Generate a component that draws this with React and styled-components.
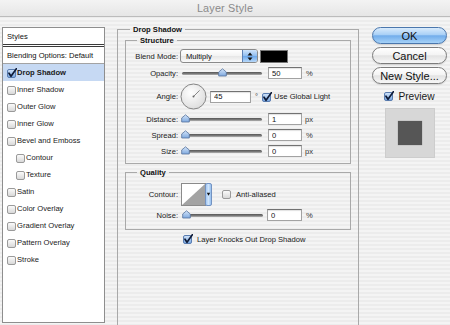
import React from 'react'
import styled, { createGlobalStyle } from 'styled-components'

const GlobalStyle = createGlobalStyle`
	html, body {
		margin: 0;
		padding: 0;
	}
	body {
		width: 450px;
		height: 325px;
		overflow: hidden;
		font-family: "Liberation Sans", Arial, sans-serif;
		color: #111;
	}
`

const Window = styled.div`
	width: 450px;
	height: 325px;
	display: flex;
	flex-direction: column;
	overflow: hidden;
	background: repeating-linear-gradient(to bottom, #ececec 0, #ececec 2px, #f4f4f4 2px, #f4f4f4 4px);
`
const TitleBar = styled.div`
	height: 16px;
	flex: none;
	display: flex;
	align-items: center;
	justify-content: center;
	border-bottom: 1px solid #bcbcbc;
	background: linear-gradient(#f3f3f3, #e6e6e6);
	font-size: 10.8px;
	color: #8a8a8a;
	letter-spacing: 0.2px;
`
const Body = styled.div`
	flex: 1;
	min-height: 0;
	display: flex;
	padding: 7px 3px 0 2px;
`

// LEFT LIST
const Sidebar = styled.div`
	width: 103px;
	height: 296px;
	flex: none;
	box-sizing: border-box;
	margin-top: 3px;
	margin-right: 12px;
	background: #fff;
	border: 1px solid #8e8e8e;
	font-size: 7.6px;
`
const SideHead = styled.div`
	height: 16px;
	display: flex;
	align-items: center;
	padding-left: 4px;
	color: #111;
	border-bottom: ${props => props.$double ? '3px double #3a3a3a' : '1px solid #a3a3a3'};
`
const StyleItem = styled.div`
	height: 17px;
	display: flex;
	align-items: center;
	padding-left: ${props => props.$indent ? 13 : 4}px;
	background: ${props => props.$active ? '#c6d9f3' : 'transparent'};
	font-weight: ${props => props.$active ? 'bold' : 'normal'};
	color: #1a1a1a;
`

// MIDDLE
const Middle = styled.div`
	width: 242px;
	flex: none;
	display: flex;
	flex-direction: column;
	font-size: 7.6px;
`
const Group = styled.fieldset`
	margin: 0;
	min-width: 0;
	min-inline-size: 0;
	padding: ${props => props.$pad};
	border: 1px solid #a9a9a9;
	margin-top: ${props => props.$top || 0}px;
	${props => props.$open && 'border-bottom: none; flex: 1;'}
`
const GroupTitle = styled.legend`
	padding: 0 3px;
	margin-left: ${props => props.$indent}px;
	font-size: 7.6px;
	font-weight: bold;
	line-height: 11px;
	color: #111;
`
const Row = styled.div`
	height: ${props => props.$h}px;
	display: flex;
	align-items: center;
	padding-left: ${props => props.$indent || 0}px;
`
const Label = styled.span`
	width: 54px;
	flex: none;
	box-sizing: border-box;
	padding-right: 2px;
	text-align: right;
	color: #1a1a1a;
`
const Unit = styled.span`
	margin-left: ${props => props.$gap || 4}px;
	color: #333;
`
const Popup = styled.div`
	width: 78px;
	height: 14px;
	box-sizing: border-box;
	display: flex;
	border: 1px solid #8a8a8a;
	border-radius: 3px;
	overflow: hidden;
	background: linear-gradient(#ffffff, #f3f3f3 50%, #e6e6e6 51%, #fafafa);
`
const PopupText = styled.span`
	flex: 1;
	display: flex;
	align-items: center;
	padding-left: 5px;
	color: #111;
`
const Stepper = styled.span`
	width: 14px;
	display: flex;
	align-items: center;
	justify-content: center;
	border-left: 1px solid #5d80b4;
	background: linear-gradient(#cfe4fb, #8fbdf0 50%, #6aa6ea 51%, #b7d8fa);
`
const Swatch = styled.div`
	width: 28px;
	height: 13px;
	margin-left: 2px;
	box-sizing: border-box;
	background: #000;
	border: 1px solid #777;
`
const SliderBox = styled.div`
	position: relative;
	width: ${props => props.$w || 84}px;
	height: 10px;
	margin-left: ${props => props.$left || 0}px;
	flex: none;
	display: flex;
	align-items: center;
	padding: 0 2px;
	box-sizing: border-box;
`
const Track = styled.div`
	flex: 1;
	height: 3px;
	border-radius: 2px;
	background: linear-gradient(#555, #7e7e7e 60%, #b5b5b5);
`
const ThumbWrap = styled.svg`
	position: absolute;
	top: 0;
	left: calc(5px + (100% - 10px) * ${props => props.$value / 100} - 4.5px);
`
const Field = styled.input`
	width: ${props => props.$w || 34}px;
	height: 12px;
	box-sizing: border-box;
	margin: 0 0 0 ${props => props.$gap || 4}px;
	padding: 0 0 0 3px;
	border: 1px solid #a2a2a2;
	border-top-color: #727272;
	box-shadow: inset 0 1px 1px rgba(0, 0, 0, 0.12);
	background: #fff;
	font-family: "Liberation Sans", Arial, sans-serif;
	font-size: 7.6px;
	color: #111;
	outline: none;
`
const CheckLabel = styled.span`
	margin-left: ${props => props.$gap || 4}px;
	color: #1a1a1a;
`
const Spacer = styled.span`
	width: ${props => props.$w}px;
	flex: none;
`

// RIGHT COLUMN
const Side = styled.div`
	width: 75px;
	flex: none;
	margin-left: 13px;
	margin-top: 3px;
	display: flex;
	flex-direction: column;
	align-items: center;
`
const Button = styled.div`
	width: 75px;
	height: 17px;
	box-sizing: border-box;
	margin-bottom: 3px;
	display: flex;
	align-items: center;
	justify-content: center;
	border-radius: 9px;
	font-size: 11px;
	color: #111;
	border: 1px solid ${props => props.$primary ? '#4b77ad' : '#7d7d7d'};
	background: ${props => props.$primary
		? 'linear-gradient(#d9ebfc, #a9d0f6 45%, #72adeb 52%, #a6d2f8)'
		: 'linear-gradient(#ffffff, #f4f4f4 45%, #e3e3e3 52%, #f7f7f7)'};
	box-shadow: 0 1px 1px rgba(0, 0, 0, 0.12);
`
const PreviewRow = styled.div`
	height: 18px;
	display: flex;
	align-items: center;
	font-size: 10.2px;
`
const PreviewBox = styled.div`
	width: 50px;
	height: 50px;
	box-sizing: border-box;
	margin-top: 3px;
	display: flex;
	align-items: center;
	justify-content: center;
	background: #d7d7d7;
	border: 1px solid #cdcdcd;
`
const PreviewSquare = styled.div`
	width: 24px;
	height: 24px;
	background: #565656;
	box-shadow: 0 0 1px rgba(0, 0, 0, 0.4);
`

// DRAWINGS
const Check = ({ checked }) => (
	<svg width="10" height="10" viewBox="0 0 10 10" style={{ flex: 'none' }}>
		<defs>
			<linearGradient id="cbOff" x1="0" y1="0" x2="0" y2="1">
				<stop offset="0" stopColor="#fdfdfd" />
				<stop offset="1" stopColor="#d6d6d6" />
			</linearGradient>
			<linearGradient id="cbOn" x1="0" y1="0" x2="0" y2="1">
				<stop offset="0" stopColor="#d3e5fa" />
				<stop offset="1" stopColor="#76a6e2" />
			</linearGradient>
		</defs>
		<rect x="0.5" y="1.5" width="8" height="8" rx="1.5"
			fill={checked ? 'url(#cbOn)' : 'url(#cbOff)'}
			stroke={checked ? '#5a7db0' : '#9a9a9a'} />
		{checked && (
			<path d="M2 5.2 L4 8.3 L9.4 0.7" fill="none" stroke="#0e1a36"
				strokeWidth="1.7" strokeLinecap="round" strokeLinejoin="round" />
		)}
	</svg>
)

const Thumb = ({ value }) => (
	<ThumbWrap $value={value} width="9" height="9" viewBox="0 0 9 9">
		<defs>
			<linearGradient id="thumbG" x1="0" y1="0" x2="0" y2="1">
				<stop offset="0" stopColor="#d6e6fa" />
				<stop offset="1" stopColor="#7ea9df" />
			</linearGradient>
		</defs>
		<path d="M4.5 0.8 L8.3 4 L8.3 8 L0.7 8 L0.7 4 Z" fill="url(#thumbG)" stroke="#56729c" strokeWidth="0.8" />
	</ThumbWrap>
)

const Slider = ({ value, w, left }) => (
	<SliderBox $w={w} $left={left}>
		<Track />
		<Thumb value={value} />
	</SliderBox>
)

const Arrows = () => (
	<svg width="6" height="9" viewBox="0 0 6 9">
		<path d="M3 0.5 L5.5 3.5 L0.5 3.5 Z" fill="#111" />
		<path d="M0.5 5.5 L5.5 5.5 L3 8.5 Z" fill="#111" />
	</svg>
)

const Dial = () => (
	<svg width="27" height="27" viewBox="0 0 27 27" style={{ flex: 'none' }}>
		<defs>
			<radialGradient id="dialG" cx="0.4" cy="0.35" r="0.7">
				<stop offset="0" stopColor="#ffffff" />
				<stop offset="1" stopColor="#dcdcdc" />
			</radialGradient>
		</defs>
		<circle cx="13.5" cy="13.5" r="12.5" fill="url(#dialG)" stroke="#858585" />
		<line x1="13.5" y1="13.5" x2="19.6" y2="7.4" stroke="#7a7a7a" strokeWidth="0.9" />
		<circle cx="13.5" cy="13.5" r="1" fill="#666" />
	</svg>
)

const ContourThumb = () => (
	<svg width="31" height="23" viewBox="0 0 31 23" style={{ flex: 'none', marginLeft: 1 }}>
		<defs>
			<linearGradient id="stripG" x1="0" y1="0" x2="1" y2="0">
				<stop offset="0" stopColor="#9cc4f2" />
				<stop offset="0.5" stopColor="#cfe4fb" />
				<stop offset="1" stopColor="#8ab8ec" />
			</linearGradient>
		</defs>
		<rect x="0.5" y="0.5" width="24" height="22" fill="#fff" stroke="#8a8a8a" />
		<path d="M1 22 L24 1 L24 22 Z" fill="#a3a3a3" />
		<rect x="24.5" y="0.5" width="6" height="22" rx="1.5" fill="url(#stripG)" stroke="#7393c2" />
		<path d="M25.8 9.8 L29.2 9.8 L27.5 12.8 Z" fill="#111" />
	</svg>
)

const styleItems = [
	{ label: 'Drop Shadow', checked: true, active: true },
	{ label: 'Inner Shadow' },
	{ label: 'Outer Glow' },
	{ label: 'Inner Glow' },
	{ label: 'Bevel and Emboss' },
	{ label: 'Contour', indent: true },
	{ label: 'Texture', indent: true },
	{ label: 'Satin' },
	{ label: 'Color Overlay' },
	{ label: 'Gradient Overlay' },
	{ label: 'Pattern Overlay' },
	{ label: 'Stroke' },
]

export default function App() {
	return (
		<>
			<GlobalStyle />
			<Window>
				<TitleBar>Layer Style</TitleBar>
				<Body>
					<Sidebar>
						<SideHead $double>Styles</SideHead>
						<SideHead>Blending Options: Default</SideHead>
						{styleItems.map(item => (
							<StyleItem key={item.label} $indent={item.indent} $active={item.active}>
								<Check checked={item.checked} />
								<span>{item.label}</span>
							</StyleItem>
						))}
					</Sidebar>

					<Middle>
						<Group $open $pad="0 7px">
							<GroupTitle $indent={5}>Drop Shadow</GroupTitle>

							<Group $pad="2px 0 4px 0">
								<GroupTitle $indent={11}>Structure</GroupTitle>
								<Row $h={16}>
									<Label>Blend Mode:</Label>
									<Popup>
										<PopupText>Multiply</PopupText>
										<Stepper><Arrows /></Stepper>
									</Popup>
									<Swatch />
								</Row>
								<Row $h={18}>
									<Label>Opacity:</Label>
									<Slider value={50} />
									<Field readOnly value="50" />
									<Unit>%</Unit>
								</Row>
								<Row $h={29}>
									<Label>Angle:</Label>
									<Dial />
									<Field readOnly value="45" $w={41} $gap={3} />
									<Unit $gap={4}>°</Unit>
									<Spacer $w={4} />
									<Check checked />
									<CheckLabel $gap={2}>Use Global Light</CheckLabel>
								</Row>
								<Row $h={16}>
									<Label>Distance:</Label>
									<Slider value={0} />
									<Field readOnly value="1" />
									<Unit $gap={3}>px</Unit>
								</Row>
								<Row $h={16}>
									<Label>Spread:</Label>
									<Slider value={0} />
									<Field readOnly value="0" />
									<Unit>%</Unit>
								</Row>
								<Row $h={16}>
									<Label>Size:</Label>
									<Slider value={0} />
									<Field readOnly value="0" />
									<Unit $gap={3}>px</Unit>
								</Row>
							</Group>

							<Group $top={3} $pad="4px 0 5px 0">
								<GroupTitle $indent={11}>Quality</GroupTitle>
								<Row $h={24}>
									<Label>Contour:</Label>
									<ContourThumb />
									<Spacer $w={10} />
									<Check />
									<CheckLabel $gap={4}>Anti-aliased</CheckLabel>
								</Row>
								<Row $h={18}>
									<Label>Noise:</Label>
									<Slider value={0} w={84} left={1} />
									<Field readOnly value="0" $gap={2} $w={35} />
									<Unit>%</Unit>
								</Row>
							</Group>

							<Row $h={18} $indent={58}>
								<Check checked />
								<CheckLabel $gap={4}>Layer Knocks Out Drop Shadow</CheckLabel>
							</Row>
						</Group>
					</Middle>

					<Side>
						<Button $primary>OK</Button>
						<Button>Cancel</Button>
						<Button>New Style...</Button>
						<PreviewRow>
							<Check checked />
							<CheckLabel $gap={4}>Preview</CheckLabel>
						</PreviewRow>
						<PreviewBox>
							<PreviewSquare />
						</PreviewBox>
					</Side>
				</Body>
			</Window>
		</>
	)
}
